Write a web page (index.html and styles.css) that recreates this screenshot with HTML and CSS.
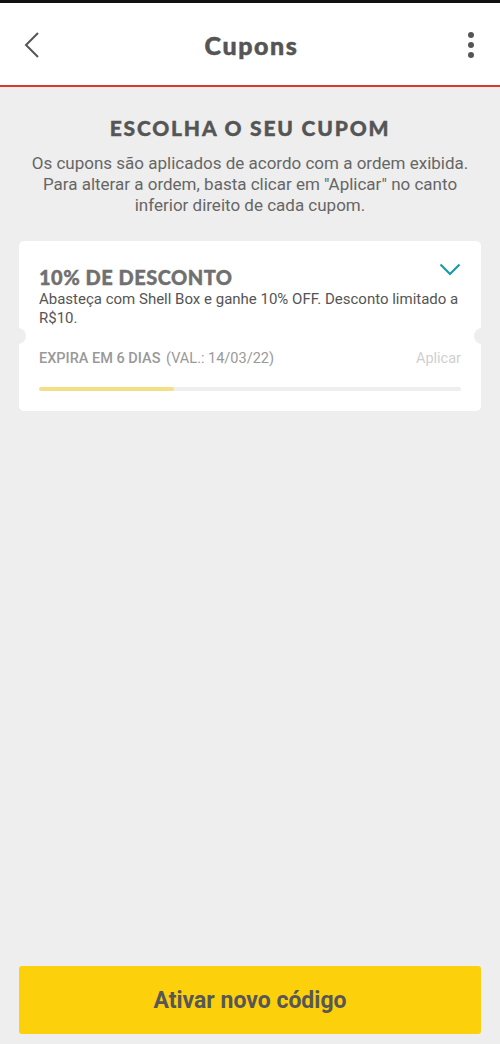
FILE: index.html
```html
<!DOCTYPE html>
<html lang="pt">
<head>
<meta charset="utf-8">
<link rel="stylesheet" href="styles.css">
</head>
<body>
<div class="app">
  <div class="statusbar"></div>
  <header class="topbar">
    <svg class="back" width="16" height="26" viewBox="0 0 16 26"><path d="M14 1 L2 13 L14 25" fill="none" stroke="#555" stroke-width="2"/></svg>
    <h1 class="title">Cupons</h1>
    <svg class="more" width="8" height="28" viewBox="0 0 8 28"><circle cx="4" cy="4" r="3" fill="#555"/><circle cx="4" cy="14" r="3" fill="#555"/><circle cx="4" cy="24" r="3" fill="#555"/></svg>
  </header>
  <main class="content">
    <h2 class="heading">ESCOLHA O SEU CUPOM</h2>
    <p class="intro">Os cupons são aplicados de acordo com a ordem exibida.<br>Para alterar a ordem, basta clicar em "Aplicar" no canto<br>inferior direito de cada cupom.</p>
    <section class="card">
      <div class="card-head">
        <h3 class="card-title">10% DE DESCONTO</h3>
        <svg class="chev" width="22" height="13" viewBox="0 0 22 13"><path d="M1.5 1.5 L11 11 L20.5 1.5" fill="none" stroke="#1b9aa6" stroke-width="2.2"/></svg>
      </div>
      <p class="card-desc">Abasteça com Shell Box e ganhe 10% OFF. Desconto limitado a R$10.</p>
      <div class="card-foot">
        <span class="expire"><b>EXPIRA EM 6 DIAS</b> (VAL.: 14/03/22)</span>
        <span class="apply">Aplicar</span>
      </div>
      <div class="progress"><div class="fill" style="width:32%"></div></div>
      <span class="notch left"></span>
      <span class="notch right"></span>
    </section>
  </main>
  <footer class="bottom">
    <button class="cta">Ativar novo código</button>
  </footer>
</div>
</body>
</html>
```
FILE: styles.css
```css
* { box-sizing: border-box; }
html, body { margin: 0; padding: 0; }
body { background: #eeeeee; font-family: Roboto, "Liberation Sans", sans-serif; }
.app { width: 500px; height: 1044px; display: flex; flex-direction: column; background: #eeeeee; }
.statusbar { height: 3px; background: #111; }
.topbar {
  height: 84px; background: #fff; border-bottom: 2px solid #d63a2a;
  display: flex; align-items: center; justify-content: space-between;
  padding: 0 25px 0 24px;
}
.back { margin-top: 2px; }
.title { margin: 0; font-family: "Lato Black", Lato, sans-serif; font-weight: 900; font-size: 25px; letter-spacing: 1.6px; color: #555; position: relative; left: -2px; top: 1px; -webkit-text-stroke: 0.5px #555; }
.more { margin-top: 1px; }
.content { flex: 1; display: flex; flex-direction: column; align-items: center; padding: 0 19px; }
.heading { margin: 28px 0 0; font-family: "Lato Black", Lato, sans-serif; font-weight: 900; font-size: 21px; color: #555; letter-spacing: 1.8px; line-height: 26px; -webkit-text-stroke: 0.4px #555; }
.intro { margin: 12px 0 0; text-align: center; font-size: 17px; line-height: 21px; color: #666; }
.card {
  position: relative; width: 100%; margin-top: 25px; background: #fff; border-radius: 5px;
  padding: 21px 20px 20px;
}
.card-head { display: flex; justify-content: space-between; align-items: flex-start; }
.card-title { margin: 2px 0 0; font-family: "Lato Black", Lato, sans-serif; font-weight: 900; font-size: 20px; color: #707070; letter-spacing: 0.5px; line-height: 26px; -webkit-text-stroke: 0.4px #707070; }
.chev { margin-top: 1px; }
.card-desc { margin: 0; font-size: 15px; line-height: 19px; color: #555; }
.card-foot { display: flex; justify-content: space-between; margin-top: 22px; font-size: 14.5px; line-height: 18px; color: #999; }
.expire b { font-weight: 500; margin-right: 2px; }
.apply { color: #cfcfcf; }
.progress { margin-top: 19px; height: 4px; background: #eeeeee; border-radius: 2px; overflow: hidden; }
.fill { height: 100%; background: #f4df86; border-radius: 2px; }
.notch { position: absolute; top: 87px; width: 16px; height: 16px; border-radius: 50%; background: #eeeeee; }
.notch.left { left: -9px; }
.notch.right { right: -9px; }
.bottom { padding: 0 19px 10px; }
.cta {
  width: 100%; height: 68px; border: 0; border-radius: 3px; background: #fcd00b;
  font-family: Roboto, sans-serif; font-weight: 700; font-size: 23px; color: #575757;
}
```
